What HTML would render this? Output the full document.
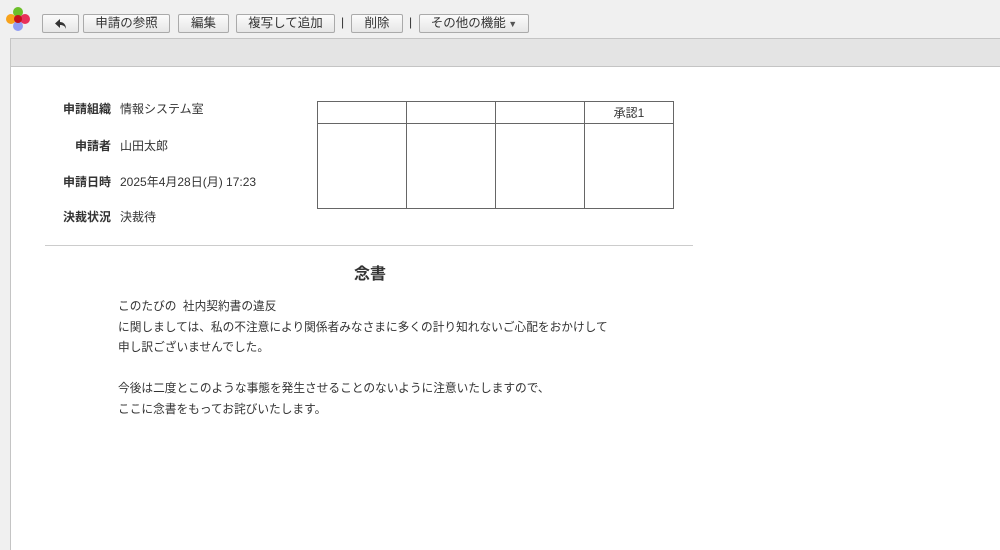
<!DOCTYPE html>
<html><head><meta charset="utf-8"><style>
*{margin:0;padding:0;box-sizing:border-box}
body{width:1000px;height:550px;background:#f0f0f0;font-family:"Liberation Sans","Noto Sans CJK JP",sans-serif;font-size:12px;color:#333;position:relative;overflow:hidden}
.btn{position:absolute;top:14px;height:19px;border:1px solid #aaa;border-radius:2px;background:linear-gradient(#fbfbfb,#e6e6e6);font-size:12.5px;line-height:17px;text-align:center;color:#333}
.sep{position:absolute;top:15px;font-size:12px;color:#333}
.panel{position:absolute;left:10px;top:38px;width:990px;height:512px;background:#fff;border-left:1px solid #c4c4c4;border-top:1px solid #c4c4c4}
.bar{position:absolute;left:0;top:0;right:0;height:28px;background:#e4e4e4;border-bottom:1px solid #c4c4c4}
.lbl{position:absolute;width:100px;text-align:right;font-weight:bold;font-size:12px;left:0}
.val{position:absolute;left:109px;font-size:12px}
table{position:absolute;left:306px;top:62px;border-collapse:collapse}
td{border:1px solid #666;width:89px;font-size:12px;text-align:center}
.t{position:absolute;left:107px;font-size:11.7px;line-height:20.6px}
</style></head><body>
<svg style="position:absolute;left:5px;top:6px" width="26" height="26" viewBox="0 0 26 26">
<circle cx="13" cy="6" r="5" fill="#6cbf2a"/><circle cx="6" cy="13" r="5" fill="#f7a21b"/><circle cx="20" cy="13" r="5" fill="#e8305a"/><circle cx="13" cy="20" r="5" fill="#8f9cf5"/><circle cx="13" cy="13" r="4" fill="#c4101e"/></svg>
<div class="btn" style="left:42px;width:37px"><svg width="14" height="12" viewBox="0 0 14 12" style="margin-top:3px"><path d="M6 1 L1 5.5 L6 10 V7 C9 7 11 8 12 11 C12 6 9 4 6 4 Z" fill="#333"/></svg></div>
<div class="btn" style="left:83px;width:87px">申請の参照</div>
<div class="btn" style="left:178px;width:51px">編集</div>
<div class="btn" style="left:236px;width:99px">複写して追加</div>
<div class="sep" style="left:341px">|</div>
<div class="btn" style="left:351px;width:52px">削除</div>
<div class="sep" style="left:409px">|</div>
<div class="btn" style="left:419px;width:110px">その他の機能<span style="font-size:9px;color:#555"> ▼</span></div>
<div class="panel">
<div class="bar"></div>
<div class="lbl" style="top:61px">申請組織</div><div class="val" style="top:61px">情報システム室</div>
<div class="lbl" style="top:98px">申請者</div><div class="val" style="top:98px">山田太郎</div>
<div class="lbl" style="top:134px">申請日時</div><div class="val" style="top:134px">2025年4月28日(月) 17:23</div>
<div class="lbl" style="top:169px">決裁状況</div><div class="val" style="top:169px">決裁待</div>
<table><tr style="height:22px"><td></td><td></td><td></td><td>承認1</td></tr><tr style="height:85px"><td></td><td></td><td></td><td></td></tr></table>
<div style="position:absolute;left:34px;top:206px;width:648px;border-top:1px solid #ccc"></div>
<div style="position:absolute;left:343px;top:221px;font-size:16px;font-weight:bold">念書</div>
<div class="t" style="top:258px">このたびの&nbsp; 社内契約書の違反<br>に関しましては、私の不注意により関係者みなさまに多くの計り知れないご心配をおかけして<br>申し訳ございませんでした。<br><br>今後は二度とこのような事態を発生させることのないように注意いたしますので、<br>ここに念書をもってお詫びいたします。</div>
</div>
</body></html>
